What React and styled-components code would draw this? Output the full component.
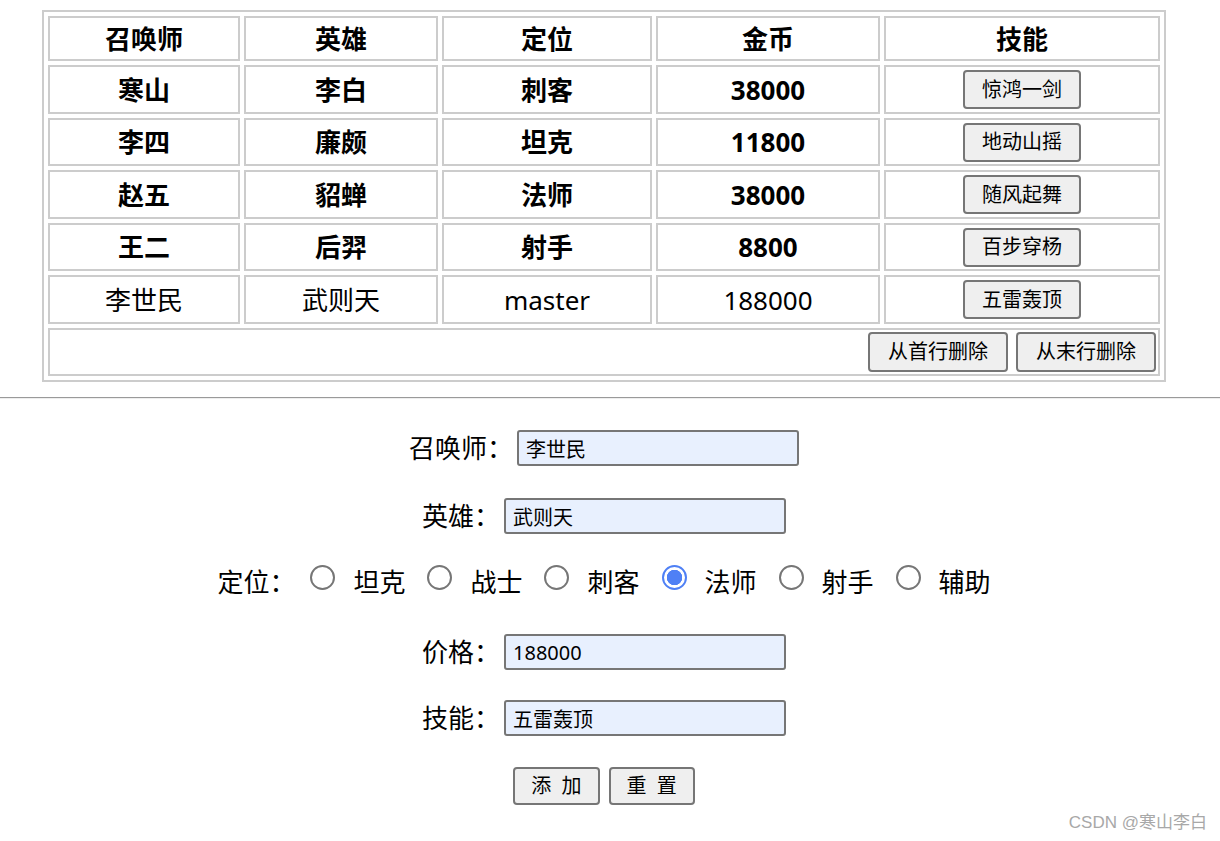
import React from 'react';
import styled, { createGlobalStyle } from 'styled-components';

const Global = createGlobalStyle`
  html, body { margin: 0; padding: 0; background: #fff; }
  body { font-family: "Noto Sans", "Noto Sans CJK SC", sans-serif; color: #000; }
`;

const Page = styled.div`
  position: relative;
  width: 1220px;
  height: 841px;
  padding-top: 10px;
  box-sizing: border-box;
  overflow: hidden;
`;

const Center = styled.div`
  width: 1208px;
  display: flex;
  flex-direction: column;
  align-items: center;
`;

const Table = styled.table`
  width: 1124px;
  table-layout: fixed;
  border-collapse: separate;
  border-spacing: 4px;
  border: 2px solid #cccccc;
  box-sizing: border-box;
`;

const Cell = styled.td`
  box-sizing: border-box;
  border: 2px solid #cccccc;
  padding: 0 1px;
  height: ${p => p.$h || 48}px;
  width: ${p => (p.$w ? `${p.$w}px` : 'auto')};
  text-align: ${p => p.$align || 'center'};
  vertical-align: middle;
  font-size: 26px;
  font-weight: ${p => (p.$bold ? 700 : 400)};
  line-height: 1;
`;

const Btn = styled.button`
  font-family: "Noto Sans", "Noto Sans CJK SC", sans-serif;
  font-size: 20px;
  height: ${p => p.$h || 39}px;
  padding: 0 ${p => p.$px || 17}px;
  border: 2px solid #767676;
  border-radius: 4px;
  background: #efefef;
  color: #000;
  line-height: 1;
  word-spacing: 5px;
  cursor: pointer;
`;

const BtnGroup = styled.div`
  display: flex;
  justify-content: flex-end;
  gap: 8px;
  padding-right: 1px;
`;

const Hr = styled.div`
  margin-top: 15px;
  width: 1220px;
  height: 2px;
  border-top: 1px solid #9a9a9a;
  border-bottom: 1px solid #eeeeee;
  box-sizing: border-box;
`;

const Row = styled.div`
  display: flex;
  align-items: center;
  height: ${p => p.$h || 36}px;
  margin-top: ${p => p.$mt}px;
  gap: ${p => (p.$gap != null ? p.$gap : 4)}px;
`;

const Label = styled.label`
  font-size: 26px;
  line-height: 1;
  white-space: nowrap;
`;

const Input = styled.input`
  box-sizing: border-box;
  width: 282px;
  height: 36px;
  border: 2px solid #767676;
  border-radius: 3px;
  background: #e8f0fe;
  padding: 0 7px;
  font-family: "Noto Sans", "Noto Sans CJK SC", sans-serif;
  font-size: 20px;
  color: #000;
  outline: none;
`;

const RadioGroup = styled.div`
  display: flex;
  align-items: center;
  gap: 22px;
  margin-left: 11px;
`;

const RadioItem = styled.label`
  display: flex;
  align-items: center;
  gap: 18px;
  font-size: 26px;
  line-height: 1;
`;

const Radio = styled.input`
  appearance: none;
  margin: 0 0 10px 0;
  width: 25px;
  height: 25px;
  border-radius: 50%;
  border: 2px solid #767676;
  background: #fff;
  box-sizing: border-box;
  &:checked {
    border-color: #4f80f5;
    background: radial-gradient(circle, #4f80f5 0 7.5px, #fff 8px 100%);
  }
`;

const Watermark = styled.div`
  position: absolute;
  right: 13px;
  bottom: 8px;
  font-family: "Liberation Sans", "Noto Sans CJK SC", sans-serif;
  font-size: 17px;
  color: #a8a8a8;
`;

const rows = [
  ['寒山', '李白', '刺客', '38000', '惊鸿一剑', true, 49],
  ['李四', '廉颇', '坦克', '11800', '地动山摇', true, 48],
  ['赵五', '貂蝉', '法师', '38000', '随风起舞', true, 49],
  ['王二', '后羿', '射手', '8800', '百步穿杨', true, 48],
  ['李世民', '武则天', 'master', '188000', '五雷轰顶', false, 49],
];

const widths = [192, 194, 210, 224, 276];
const heads = ['召唤师', '英雄', '定位', '金币', '技能'];
const roles = ['坦克', '战士', '刺客', '法师', '射手', '辅助'];

export default function App() {
  return (
    <Page>
      <Global />
      <Center>
        <Table>
          <tbody>
            <tr>
              {heads.map((h, i) => (
                <Cell as="th" key={h} $w={widths[i]} $h={45} $bold>{h}</Cell>
              ))}
            </tr>
            {rows.map(r => (
              <tr key={r[0]}>
                {r.slice(0, 4).map((c, i) => (
                  <Cell key={i} $h={r[6]} $bold={r[5]}>{c}</Cell>
                ))}
                <Cell $h={r[6]}><Btn>{r[4]}</Btn></Cell>
              </tr>
            ))}
            <tr>
              <Cell colSpan={5} $h={48} $align="right">
                <BtnGroup>
                  <Btn $h={40} $px={18}>从首行删除</Btn>
                  <Btn $h={40} $px={18}>从末行删除</Btn>
                </BtnGroup>
              </Cell>
            </tr>
          </tbody>
        </Table>
      </Center>
      <Hr />
      <Center>
        <Row $mt={31}>
          <Label>召唤师：</Label>
          <Input defaultValue="李世民" />
        </Row>
        <Row $mt={32}>
          <Label>英雄：</Label>
          <Input defaultValue="武则天" />
        </Row>
        <Row $mt={30}>
          <Label>定位：</Label>
          <RadioGroup>
            {roles.map(role => (
              <RadioItem key={role}>
                <Radio type="radio" name="role" defaultChecked={role === '法师'} />
                {role}
              </RadioItem>
            ))}
          </RadioGroup>
        </Row>
        <Row $mt={34}>
          <Label>价格：</Label>
          <Input defaultValue="188000" />
        </Row>
        <Row $mt={30}>
          <Label>技能：</Label>
          <Input defaultValue="五雷轰顶" />
        </Row>
        <Row $mt={31} $h={38} $gap={9}>
          <Btn $h={38} $px={16}>添 加</Btn>
          <Btn $h={38} $px={16}>重 置</Btn>
        </Row>
      </Center>
      <Watermark>CSDN @寒山李白</Watermark>
    </Page>
  );
}
